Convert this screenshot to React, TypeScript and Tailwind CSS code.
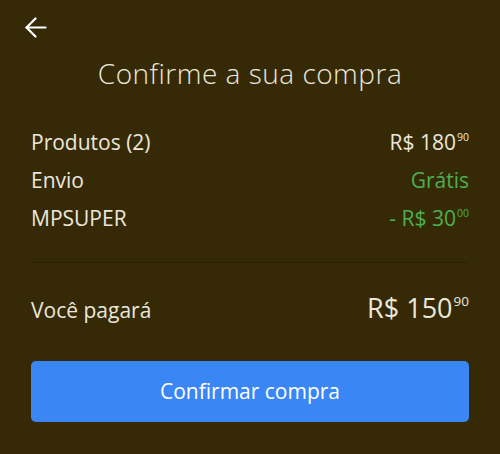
function Price({ value, cents, className }: { value: string; cents: string; className?: string }) {
  return (
    <span className={className}>
      {value}
      <sup className="text-[0.5em] top-[-0.9em] ml-px">{cents}</sup>
    </span>
  )
}

function BackArrow() {
  return (
    <svg width="22" height="21" viewBox="0 0 22 21" fill="none" stroke="white" strokeWidth="2.2" strokeLinecap="round" strokeLinejoin="round" className="block">
      <path d="M20.5 10.5H1.5" />
      <path d="M10.5 1.5L1.5 10.5L10.5 19.5" />
    </svg>
  )
}

export default function App() {
  return (
    <div className="w-[500px] h-[454px] bg-[#352a05] text-[#ebe7dc] font-['Open_Sans',sans-serif] overflow-hidden">
      <div className="pl-[25px] pt-[17px]">
        <BackArrow />
      </div>

      <h1 className="text-center text-[28px] font-light tracking-[0.5px] mt-[19px] leading-8">
        Confirme a sua compra
      </h1>

      <div className="px-[31px] mt-[39px]">
        <div className="flex flex-col gap-[10px] text-[21px] leading-[28px]">
          <div className="flex justify-between">
            <span>Produtos (2)</span>
            <Price value="R$ 180" cents="90" />
          </div>
          <div className="flex justify-between">
            <span>Envio</span>
            <span className="text-[#4caf50]">Grátis</span>
          </div>
          <div className="flex justify-between">
            <span>MPSUPER</span>
            <Price value="- R$ 30" cents="00" className="text-[#4caf50]" />
          </div>
        </div>

        <div className="h-px bg-[#2a2103] mt-[30px]" />

        <div className="flex justify-between items-baseline mt-[31px] leading-[28px]">
          <span className="text-[21px]">Você pagará</span>
          <Price value="R$ 150" cents="90" className="text-[27px] font-medium" />
        </div>

        <button className="w-full h-[61px] mt-[37px] rounded-[5px] bg-[#3a86f5] text-white text-[21px]">
          Confirmar compra
        </button>
      </div>
    </div>
  )
}
